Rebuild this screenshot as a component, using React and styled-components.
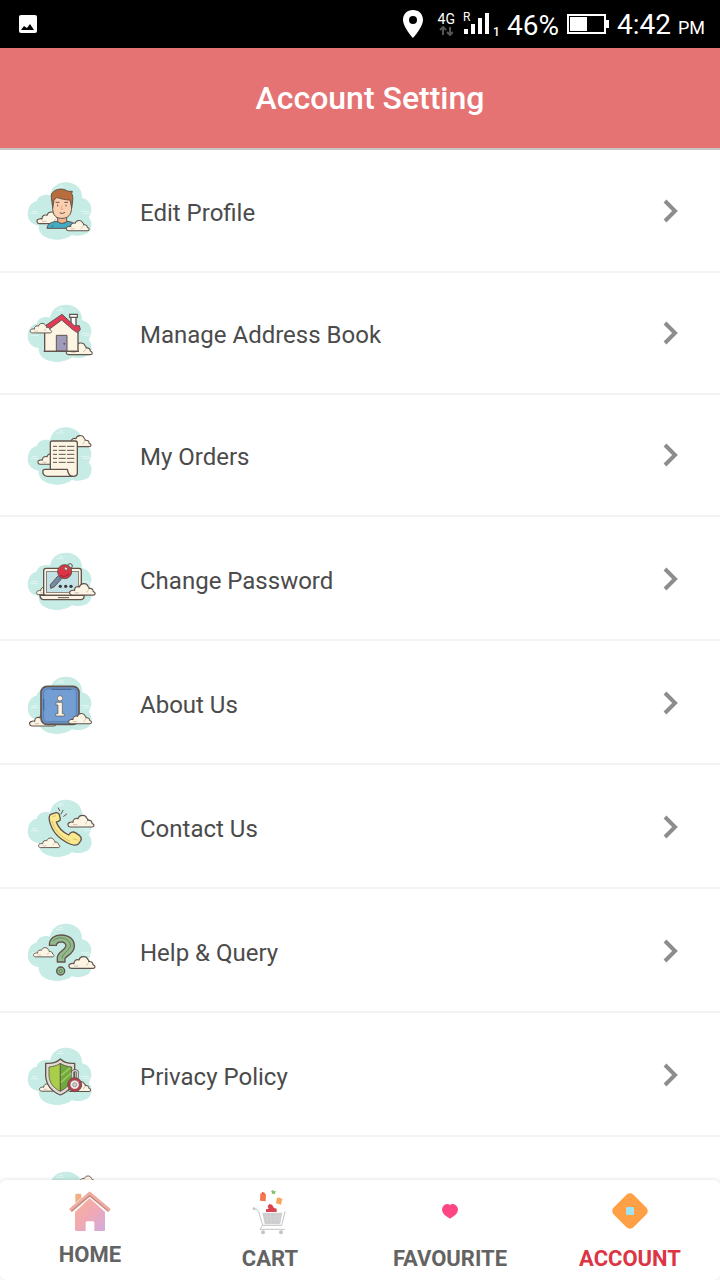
import React from 'react';
import styled, { createGlobalStyle } from 'styled-components'

const INK = '#62534c'
const CREAM = '#fdf5e4'
const CLOUD = '#c6ece5'

// soft mint cloud that sits behind every menu icon
const Backdrop = ({y = 0}) => (
  <g transform={`translate(0 ${y})`}>
    <path fill={CLOUD} d="M86 163C62 160 50 142 54 120C58 98 70 92 80 90C82 74 104 66 120 72C124 46 146 33 168 33C196 33 218 52 216 80C236 84 248 102 243 122C240 132 238 136 236 138C250 152 246 178 232 186C216 195 196 195 186 190C172 203 140 208 124 203C100 198 84 184 86 163Z" />
    <path fill="none" stroke="#fff" strokeWidth="3" opacity=".5" strokeLinecap="round" d="M62 126H84M68 120H80M140 50H160M148 44H158M214 120H236M222 126H242" />
  </g>
)

// cream cloud with flat base, about 70 x 40
const Puff = ({x, y, w = 1}) => (
  <g transform={`translate(${x} ${y}) scale(${w})`}>
    <path fill={CREAM} stroke={INK} strokeWidth="3.5" strokeLinejoin="round" d="M8 40C-1 39-2 28 7 26C10 25 14 25 16 26C15 16 24 12 31 15C34 3 53 1 57 13C60 15 61 18 60 20C68 18 73 23 73 29C82 32 80 40 73 40Z" />
    <path fill="none" stroke={INK} strokeWidth="2" strokeLinecap="round" opacity=".5" d="M17 33H28M58 25C55 26 54 29 54 31" />
  </g>
)

const ProfileArt = () => (
  <>
    <Backdrop y={5} />
    <Puff x={80} y={122} />
    <path fill="#f0b48d" stroke={INK} strokeWidth="3" d="M143 138V156Q156 168 170 156V138Z" />
    <path fill="#43abc2" stroke={INK} strokeWidth="3" strokeLinejoin="round" d="M111 176C112 162 124 157 141 155C150 163 163 163 171 155C188 157 199 162 201 176Z" />
    <path fill="none" stroke="#35879d" strokeWidth="3" d="M127 166V175M186 166V175" />
    <path fill="#fbd0b0" stroke={INK} strokeWidth="3" d="M128 91V111C127 142 142 146 156 146C173 146 185 137 185 111V90L174 78H136Z" />
    <path fill="#b96d3d" stroke={INK} strokeWidth="3" strokeLinejoin="round" d="M128 114L124 83C122 67 136 60 151 58C164 58 170 63 174 65H187L185 72C191 80 188 94 185 114L180 91C160 91 147 84 140 84L132 91Z" />
    <path fill="none" stroke={INK} strokeWidth="3" strokeLinecap="round" d="M138 98H147M164 98H173M143 106V109M168 106V109M150 130Q157 134 164 129" />
    <path fill="none" stroke="#e59d7c" strokeWidth="2.5" d="M157 107L153 119H160" />
    <Puff x={168} y={148} w={0.88} />
  </>
)

const HouseArt = () => (
  <>
    <Backdrop y={-3} />
    <Puff x={168} y={140} />
    <path fill="#fff" stroke={INK} strokeWidth="4" d="M183 96V63H198V99Z" />
    <path fill="#fff" stroke={INK} strokeWidth="3.5" d="M179 59H202V68H179Z" />
    <path fill={CREAM} stroke={INK} strokeWidth="4" d="M104 170V105L156 69L204 111V170Z" />
    <path fill="#e23b57" stroke={INK} strokeWidth="3" strokeLinejoin="round" d="M102 108V96L156 59L193 93H208L211 105L203 114L190 106L155 76L108 111Z" />
    <path fill="#9f9cbb" stroke={INK} strokeWidth="3" d="M139 169V122H171V169Z" />
    <circle cx="163" cy="147" r="3" fill={INK} />
    <Puff x={60} y={82} w={0.82} />
    <path stroke={INK} strokeWidth="4" d="M101 170H207" />
  </>
)

const OrdersArt = () => (
  <>
    <Backdrop y={5} />
    <Puff x={168} y={58} w={0.95} />
    <Puff x={83} y={113} w={0.9} />
    <path fill={CREAM} stroke={INK} strokeWidth="4" strokeLinejoin="round" d="M121 166V83Q121 79 127 79H196Q202 79 202 86V176Q201 185 189 185H170V165Z" />
    <path fill={CREAM} stroke={INK} strokeWidth="4" strokeLinejoin="round" d="M105 164H172C174 176 178 184 188 185H112C101 184 97 176 99 167Q101 164 105 164Z" />
    <path fill="none" stroke={INK} strokeWidth="3" strokeDasharray="12 5 21 4 22 80" d="M129 95H195M129 107H195M129 119H195M129 131H195M129 143H195" />
  </>
)

const PasswordArt = () => (
  <>
    <Backdrop y={3} />
    <Puff x={79} y={129} w={0.82} />
    <rect x="101" y="83" width="113" height="81" rx="7" fill={CREAM} stroke={INK} strokeWidth="4" />
    <rect x="109" y="93" width="97" height="62" fill="#c3e2e6" stroke={INK} strokeWidth="2" />
    <path fill={CREAM} stroke={INK} strokeWidth="4" strokeLinejoin="round" d="M90 164H222V170Q220 177 211 177H101Q91 176 90 164Z" />
    <path stroke={INK} strokeWidth="3" d="M144 171H177" />
    <g fill="#3c393c"><circle cx="151" cy="137" r="5" /><circle cx="167" cy="137" r="5" /><circle cx="183" cy="137" r="5" /></g>
    <path fill="#718aa7" stroke={INK} strokeWidth="3" strokeLinejoin="round" d="M145 105L155 114L132 139L122 143L121 132Z" />
    <circle cx="180" cy="76" r="7" fill="none" stroke={INK} strokeWidth="3" />
    <circle cx="164" cy="93" r="21" fill="#df3446" stroke={INK} strokeWidth="3" />
    <path fill={CREAM} stroke={INK} strokeWidth="2.5" d="M161 81Q167 76 173 84L169 91Z" />
    <path fill="none" stroke="#ad2437" strokeWidth="4" d="M150 103Q164 113 178 99" />
    <Puff x={178} y={124} w={0.98} />
  </>
)

const InfoArt = () => (
  <>
    <Backdrop />
    <Puff x={58} y={141} />
    <rect x="93" y="62" width="114" height="114" rx="18" fill="#6a94cc" stroke={INK} strokeWidth="5" />
    <rect x="101" y="70" width="98" height="98" rx="11" fill="#729ed4" stroke="#55759f" strokeWidth="2" />
    <path fill="none" stroke="#47618c" strokeWidth="3" d="M124 71H184M101 100V133" />
    <circle cx="150" cy="98" r="8" fill={CREAM} stroke={INK} strokeWidth="2" />
    <path fill={CREAM} stroke={INK} strokeWidth="2" d="M138 110H157V144H163V151H137V144H144V118H138Z" />
    <Puff x={175} y={139} w={0.88} />
  </>
)

const PhoneArt = () => (
  <>
    <Backdrop />
    <path fill="#fbe98f" stroke={INK} strokeWidth="4" strokeLinejoin="round" d="M122 77L138 72Q146 71 148 78L151 91Q151 97 139 100C145 119 158 130 176 139C181 130 190 128 196 132L209 141Q216 147 213 155L206 165Q196 173 180 166C150 153 127 131 119 99Q115 83 122 77Z" />
    <path fill="none" stroke="#d8c26c" strokeWidth="3" strokeLinecap="round" d="M129 84L137 81M126 97C133 124 152 145 179 157M190 150L202 154" />
    <path fill="none" stroke={INK} strokeWidth="3" strokeLinecap="round" d="M145 58L149 66M159 65L153 76M170 76L161 83" />
    <Puff x={173} y={75} w={1} />
    <Puff x={85} y={144} w={0.82} />
  </>
)

const HelpArt = () => (
  <>
    <Backdrop />
    <path fill="#93b98c" stroke={INK} strokeWidth="4" strokeLinejoin="round" d="M118 98C118 77 134 67 153 67C179 67 194 82 193 102C192 121 175 126 165 137V148H142V134C143 119 162 114 167 102C170 94 162 87 153 88C143 88 140 91 139 98Z" />
    <path fill="none" stroke="#64895f" strokeWidth="3" d="M129 86C140 70 171 73 180 91C188 111 158 118 156 137" />
    <circle cx="152" cy="175" r="12" fill="#93b98c" stroke={INK} strokeWidth="4" />
    <circle cx="152" cy="175" r="5" fill="none" stroke="#64895f" strokeWidth="3" />
    <Puff x={70} y={101} w={0.79} />
    <Puff x={176} y={127} w={1} />
  </>
)

const PrivacyArt = () => (
  <>
    <Backdrop />
    <Puff x={88} y={130} w={0.84} />
    <Puff x={174} y={130} w={0.86} />
    <path fill="#e1ddd4" stroke={INK} strokeWidth="4" strokeLinejoin="round" d="M151 67C140 78 122 81 107 80V118C109 146 125 164 151 175C177 164 192 146 194 118V80C178 81 162 78 151 67Z" />
    <path fill="#a9cf4a" stroke={INK} strokeWidth="2.5" d="M151 80C141 87 128 90 117 91V118C119 139 130 154 151 164Z" />
    <path fill="#6fa93c" stroke={INK} strokeWidth="2.5" d="M151 80C161 87 174 90 185 91V118C183 139 172 154 151 164Z" />
    <path stroke="#9cc95a" strokeWidth="5" d="M153 117L180 94M153 137L184 109" />
    <path fill="none" stroke={INK} strokeWidth="8" d="M187 126V110Q187 102 195 102Q203 102 203 110V126" />
    <path fill="none" stroke="#d7d5d2" strokeWidth="4" d="M187 126V110Q187 102 195 102Q203 102 203 110V126" />
    <circle cx="194" cy="144" r="21" fill="#b93c4b" stroke={INK} strokeWidth="3" />
    <circle cx="194" cy="144" r="14" fill="#eeeae4" stroke="#8f3440" strokeWidth="2" />
    <circle cx="194" cy="144" r="6" fill="#d2d0cc" stroke="#777" strokeWidth="2" />
  </>
)

const TermsArt = () => (
  <>
    <Backdrop />
    <Puff x={198} y={42} w={0.8} />
  </>
)

// mid is the vertical centre of each drawing
const rows = [
  {label: 'Edit Profile', art: ProfileArt, mid: 124},
  {label: 'Manage Address Book', art: HouseArt, mid: 115},
  {label: 'My Orders', art: OrdersArt, mid: 121},
  {label: 'Change Password', art: PasswordArt, mid: 115, tall: true},
  {label: 'About Us', art: InfoArt, mid: 112, tall: true},
  {label: 'Contact Us', art: PhoneArt, mid: 115, tall: true},
  {label: 'Help & Query', art: HelpArt, mid: 115, tall: true},
  {label: 'Privacy Policy', art: PrivacyArt, mid: 115, tall: true},
  {label: '', art: TermsArt, mid: 115, tall: true},
]

const HomeIcon = () => (
  <svg width="42" height="42" viewBox="2 -4 126 126" aria-hidden="true">
    <defs>
      <linearGradient id="homeFill" x1="0" y1="0" x2="1" y2="1">
        <stop offset="0" stopColor="#f6b393" />
        <stop offset=".5" stopColor="#f0a9b4" />
        <stop offset="1" stopColor="#d2a9df" />
      </linearGradient>
    </defs>
    <path fill="#efb184" d="M21 10Q21 7 25 7H35Q39 7 39 11V20L21 35Z" />
    <path fill="url(#homeFill)" d="M20 62L64 20L110 62V116Q110 119 106 119H78V94Q78 90 74 90H56Q52 90 52 94V119H24Q20 119 20 115Z" />
    <path fill="none" stroke="#fff" strokeWidth="4" d="M7 64L64 17L123 64" />
    <path fill="none" stroke="#c58a83" strokeWidth="11" strokeLinejoin="round" d="M7 58L64 9L123 58" />
    <path fill="none" stroke="#eeaca0" strokeWidth="8" strokeLinejoin="round" d="M5 56L64 5L124 56" />
  </svg>
)

const CartIcon = () => (
  <svg width="36" height="46" viewBox="0 2 108 138" aria-hidden="true">
    <path fill="#f4764f" d="M25 12L42 15L41 36L24 34Z" />
    <path fill="#e4523f" d="M30 8L38 10L38 15L29 13Z" />
    <path fill="#7ec06c" d="M62 2L66 6L72 5L69 10L70 15L64 13L59 14L60 9L57 6Z" />
    <path fill="#f7a75b" d="M74 28L79 24L91 29L87 46L72 42Z" />
    <path fill="#d9434d" d="M52 44L60 46L66 56L74 58L74 68L42 68V60L50 58L47 51Z" />
    <path fill="#cdcdcf" d="M30 70H92L86 105H36Z" />
    <path fill="none" stroke="#fff" strokeWidth="1" opacity=".3" d="M43 72L47 104M57 72L58 104M72 72L70 104M84 72L79 104M32 81H90M34 92H88" />
    <path fill="none" stroke="#c4c4c6" strokeWidth="3" strokeLinecap="round" strokeLinejoin="round" d="M5 58Q17 57 20 66L32 108H89L99 67M32 108L24 120H97" />
    <path fill="none" stroke="#fff" strokeWidth="3" d="M30 72L37 105M92 72L86 105" />
    <circle cx="6" cy="58" r="4" fill="#c4c4c6" />
    <circle cx="33" cy="129" r="6" fill="#c4c4c6" />
    <circle cx="87" cy="129" r="6" fill="#c4c4c6" />
  </svg>
)

const HeartIcon = () => (
  <svg width="36" height="46" viewBox="0 1 36 46" aria-hidden="true">
    <path fill="#fd4683" d="M18 16C20 14 25 15 26 20C26 25 22 27 19 29Q18 30 17 29C14 27 10 25 10 20C11 15 16 14 18 16Z" />
  </svg>
)

const AccountIcon = () => (
  <svg width="36" height="46" viewBox="0 1 36 46" aria-hidden="true">
    <rect x="4" y="8" width="28" height="28" rx="5" fill="#ffa046" transform="rotate(45 18 22)" />
    <rect x="14" y="18" width="8" height="8" rx="1" fill="#a0e3f5" />
  </svg>
)

const tabs = [
  {label: 'HOME', icon: HomeIcon},
  {label: 'CART', icon: CartIcon},
  {label: 'FAVOURITE', icon: HeartIcon},
  {label: 'ACCOUNT', icon: AccountIcon, active: true},
]

const App = () => {
  return (
    <Screen>
      <GlobalStyle />
      <StatusBar>
        <svg width="18" height="18" viewBox="0 0 18 18" aria-hidden="true">
          <rect width="18" height="18" rx="2" fill="#fff" />
          <path d="M2 15L5 11L8 13L11 9L15 15Z" fill="#000" />
        </svg>
        <StatusGroup>
          <svg width="22" height="30" viewBox="0 0 22 30" aria-hidden="true">
            <path fill="#fff" fillRule="evenodd" d="M11 1C5 1 1 5 1 11C1 18 11 29 11 29S21 18 21 11C21 5 17 1 11 1ZM11 7A4 4 0 1 1 11 15A4 4 0 1 1 11 7Z" />
          </svg>
          <Network>
            <span>4G</span>
            <svg width="14" height="10" viewBox="0 0 14 10" aria-hidden="true">
              <path fill="none" stroke="#555" strokeWidth="2" d="M4 9V2M1 4L4 1L7 4M11 1V8M8 6L11 9L14 6" />
            </svg>
          </Network>
          <svg width="36" height="28" viewBox="0 0 36 28" aria-hidden="true">
            <text x="0" y="11" fill="#fff" fontSize="12">R</text>
            <path fill="#fff" d="M1 19H5V24H1ZM8 14H12V24H8ZM15 8H19V24H15ZM22 3H26V24H22Z" />
            <text x="30" y="26" fill="#fff" fontSize="12" fontWeight="500">1</text>
          </svg>
          <StatusText>46%</StatusText>
          <svg width="42" height="20" viewBox="0 0 42 20" aria-hidden="true">
            <rect x="1" y="1" width="37" height="18" fill="none" stroke="#fff" strokeWidth="2" />
            <path fill="#fff" d="M3 3H20V17H3ZM39 6H42V14H39Z" />
          </svg>
          <StatusText>4:42 <small>PM</small></StatusText>
        </StatusGroup>
      </StatusBar>

      <Header>
        <h1>Account Setting</h1>
      </Header>

      <Menu>
        {rows.map(({label, art: Art, mid, tall}, i) => (
          <li key={i}>
            <MenuLink href="#" $tall={tall} aria-label={label || 'More'}>
              <svg width="72" height="62" viewBox={`45 ${mid - 93} 216 186`} aria-hidden="true"><Art /></svg>
              <MenuLabel>{label}</MenuLabel>
              <svg width="16" height="24" viewBox="0 0 16 24" aria-hidden="true">
                <path fill="none" stroke="#8d8d8d" strokeWidth="4" d="M2 2L12 12L2 22" />
              </svg>
            </MenuLink>
          </li>
        ))}
      </Menu>

      <TabBar>
        {tabs.map(({label, icon: Icon, active}) => (
          <Tab key={label} href="#" $active={active}>
            <Icon />
            <span>{label}</span>
          </Tab>
        ))}
      </TabBar>
    </Screen>
  )
}

export default App

const GlobalStyle = createGlobalStyle`
  * {
    box-sizing: border-box;
  }
  body {
    margin: 0;
    background: #fff;
    font-family: Roboto, "Liberation Sans", sans-serif;
  }
  svg {
    display: block;
    flex-shrink: 0;
  }
`

const Screen = styled.div`
  display: flex;
  flex-direction: column;
  height: 100vh;
  overflow: hidden;
`

const StatusBar = styled.div`
  display: flex;
  flex-shrink: 0;
  align-items: center;
  justify-content: space-between;
  height: 48px;
  padding: 0 15px 0 19px;
  background: #000;
  color: #fff;
`

const StatusGroup = styled.div`
  display: flex;
  align-items: center;
  gap: 8px;
`

const Network = styled.div`
  display: flex;
  flex-direction: column;
  align-items: center;
  padding-left: 6px;
  font-size: 14px;
  line-height: 14px;
`

const StatusText = styled.span`
  padding-top: 4px;
  font-size: 28px;
  line-height: 44px;

  small {
    font-size: 18px;
  }
`

const Header = styled.header`
  flex-shrink: 0;
  padding: 30px 0 30px 20px;
  background: #e57373;
  border-bottom: 2px solid #c9c3c3;
  text-align: center;

  h1 {
    margin: 0;
    color: #fff;
    font-size: 32px;
    font-weight: 500;
    line-height: 40px;
  }
`

const Menu = styled.ul`
  flex: 1;
  min-height: 0;
  margin: 0;
  padding: 1px 0 0;
  overflow-y: auto;
  scrollbar-width: none;
  list-style: none;
`

const MenuLink = styled.a`
  display: flex;
  align-items: center;
  padding: ${({$tall}) => ($tall ? '31px' : '29px')} 41px 29px 25px;
  border-bottom: 2px solid #f3f3f3;
  text-decoration: none;
`

const MenuLabel = styled.span`
  flex: 1;
  padding: 3px 0 0 43px;
  color: #4b4b4b;
  font-size: 24px;
  line-height: 32px;
`

const TabBar = styled.nav`
  display: grid;
  grid-template-columns: repeat(4, 1fr);
  flex-shrink: 0;
  position: relative;
  background: #fff;
  border-radius: 6px;
  box-shadow: 0 0 5px rgba(0, 0, 0, 0.14);
`

const Tab = styled.a`
  display: flex;
  flex-direction: column;
  align-items: center;
  gap: 4px;
  padding: 10px 0 2px;
  color: ${({$active}) => ($active ? '#dc3545' : '#636363')};
  font-size: 22px;
  font-weight: 700;
  line-height: 38px;
  text-decoration: none;
`
